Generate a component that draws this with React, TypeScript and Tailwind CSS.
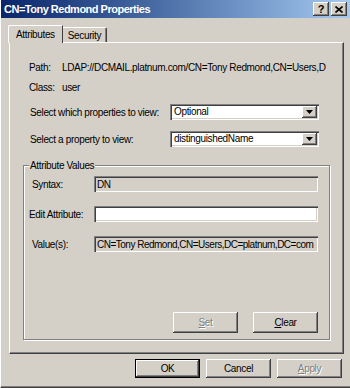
import React from 'react';

const sunken =
  'shadow-[inset_1px_1px_0_#808080,inset_2px_2px_0_#404040,inset_-1px_-1px_0_#ffffff,inset_-2px_-2px_0_#d4d0c8]';
const raised =
  'shadow-[inset_-1px_-1px_0_#404040,inset_1px_1px_0_#ffffff,inset_-2px_-2px_0_#808080,inset_2px_2px_0_#d4d0c8]';
const disabledText = 'text-[#808080] [text-shadow:1px_1px_0_#ffffff]';

const Combo: React.FC<{ value: string }> = ({ value }) => (
  <div className={`w-[149px] h-[16px] shrink-0 bg-white ${sunken} flex items-center pl-[4px] pr-[2px]`}>
    <span className="flex-1 leading-none">{value}</span>
    <div className={`w-[15px] h-[12px] bg-[#d4d0c8] ${raised} flex items-center justify-center`}>
      <svg width="7" height="4" viewBox="0 0 7 4">
        <path d="M0 0h7L3.5 4z" fill="#000" />
      </svg>
    </div>
  </div>
);

const Field: React.FC<{ value?: string; white?: boolean }> = ({ value, white }) => (
  <div
    className={`w-[224px] h-[16px] shrink-0 ${white ? 'bg-white' : 'bg-[#d4d0c8]'} ${sunken} flex items-center pl-[3px] overflow-hidden tracking-[-0.5px]`}
  >
    {value}
  </div>
);

const Btn: React.FC<{ children: React.ReactNode; disabled?: boolean; def?: boolean }> = ({
  children,
  disabled,
  def,
}) => (
  <div className={`w-[65px] flex items-center justify-center ${def ? 'border border-black' : ''}`}>
    <div
      className={`w-full h-full flex items-center justify-center bg-[#d4d0c8] ${raised} ${disabled ? disabledText : 'text-black'}`}
    >
      {children}
    </div>
  </div>
);

export default function App() {
  return (
    <div className="w-[350px] h-[388px] bg-[#d4d0c8] flex flex-col overflow-hidden whitespace-nowrap font-['Liberation_Sans',Arial,sans-serif] text-[10px] tracking-[-0.35px] text-black border-l border-l-white border-b border-b-[#404040] shadow-[inset_0_-1px_0_#808080]">
      {/* title bar */}
      <div className="h-[18px] shrink-0 bg-gradient-to-r from-[#0a246a] to-[#a6caf0] flex items-center pl-[3px] pr-[3px]">
        <span className="flex-1 text-white font-bold text-[11px] tracking-[-0.5px]">CN=Tony Redmond Properties</span>
        <div className="flex gap-[2px]">
          <div className={`w-[16px] h-[14px] bg-[#d4d0c8] ${raised} flex items-center justify-center font-bold text-[11px] leading-none`}>?</div>
          <div className={`w-[16px] h-[14px] bg-[#d4d0c8] ${raised} flex items-center justify-center`}>
            <svg width="8" height="7" viewBox="0 0 8 7">
              <path d="M0.5 0.5l7 6M7.5 0.5l-7 6" stroke="#000" strokeWidth="1.6" />
            </svg>
          </div>
        </div>
      </div>

      {/* tabs */}
      <div className="flex items-end ml-[7px] mt-[6px] h-[18px]">
        <div className="h-[18px] px-[7px] flex items-center border-t border-l border-white border-r border-r-[#404040] rounded-tl-[2px] bg-[#d4d0c8] relative z-10 -mb-px">
          Attributes
        </div>
        <div className="h-[15px] px-[5px] flex items-center border-t border-white border-r border-r-[#404040] shadow-[inset_-1px_0_0_#808080] rounded-tr-[2px]">
          Security
        </div>
      </div>

      {/* tab page */}
      <div className="ml-[8px] w-[335px] h-[312px] border-t border-l border-white border-r border-b border-r-[#404040] border-b-[#404040] shadow-[inset_-1px_-1px_0_#808080] flex flex-col pl-[19px] pr-[24px]">
        <div className="flex items-center h-[14px] mt-[17px] -mr-[20px] overflow-hidden">
          <span className="w-[33px] shrink-0">Path:</span>
          <span>LDAP://DCMAIL.platnum.com/CN=Tony Redmond,CN=Users,D</span>
        </div>
        <div className="flex items-center h-[14px] mt-[6px]">
          <span className="w-[33px] shrink-0">Class:</span>
          <span>user</span>
        </div>
        <div className="flex items-center justify-between h-[16px] mt-[10px] pl-[1px]">
          <span>Select which properties to view:</span>
          <Combo value="Optional" />
        </div>
        <div className="flex items-center justify-between h-[16px] mt-[11px] pl-[1px]">
          <span>Select a property to view:</span>
          <Combo value="distinguishedName" />
        </div>

        {/* group box */}
        <div className="relative mt-[18px] -ml-[6px] w-[307px] h-[175px] border border-[#808080] shadow-[inset_1px_1px_0_#ffffff,1px_1px_0_#ffffff] flex flex-col pl-[8px] pr-[11px]">
          <span className="absolute -top-[7px] left-[5px] px-[1px] bg-[#d4d0c8] leading-[13px]">Attribute Values</span>
          <div className="flex items-center justify-between h-[16px] mt-[10px]">
            <span>Syntax:</span>
            <Field value="DN" />
          </div>
          <div className="flex items-center justify-between h-[16px] mt-[14px]">
            <span className="-ml-[3px]">Edit Attribute:</span>
            <Field white />
          </div>
          <div className="flex items-center justify-between h-[16px] mt-[14px]">
            <span>Value(s):</span>
            <Field value="CN=Tony Redmond,CN=Users,DC=platnum,DC=com" />
          </div>
          <div className="flex justify-end gap-[15px] mt-auto mb-[6px] h-[21px]">
            <Btn disabled>
              <span><u>S</u>et</span>
            </Btn>
            <Btn>
              <span><u>C</u>lear</span>
            </Btn>
          </div>
        </div>
      </div>

      {/* dialog buttons */}
      <div className="flex justify-end gap-[6px] mt-[5px] mr-[8px] h-[19px]">
        <Btn def>OK</Btn>
        <Btn>Cancel</Btn>
        <Btn disabled>
          <span><u>A</u>pply</span>
        </Btn>
      </div>
    </div>
  );
}
